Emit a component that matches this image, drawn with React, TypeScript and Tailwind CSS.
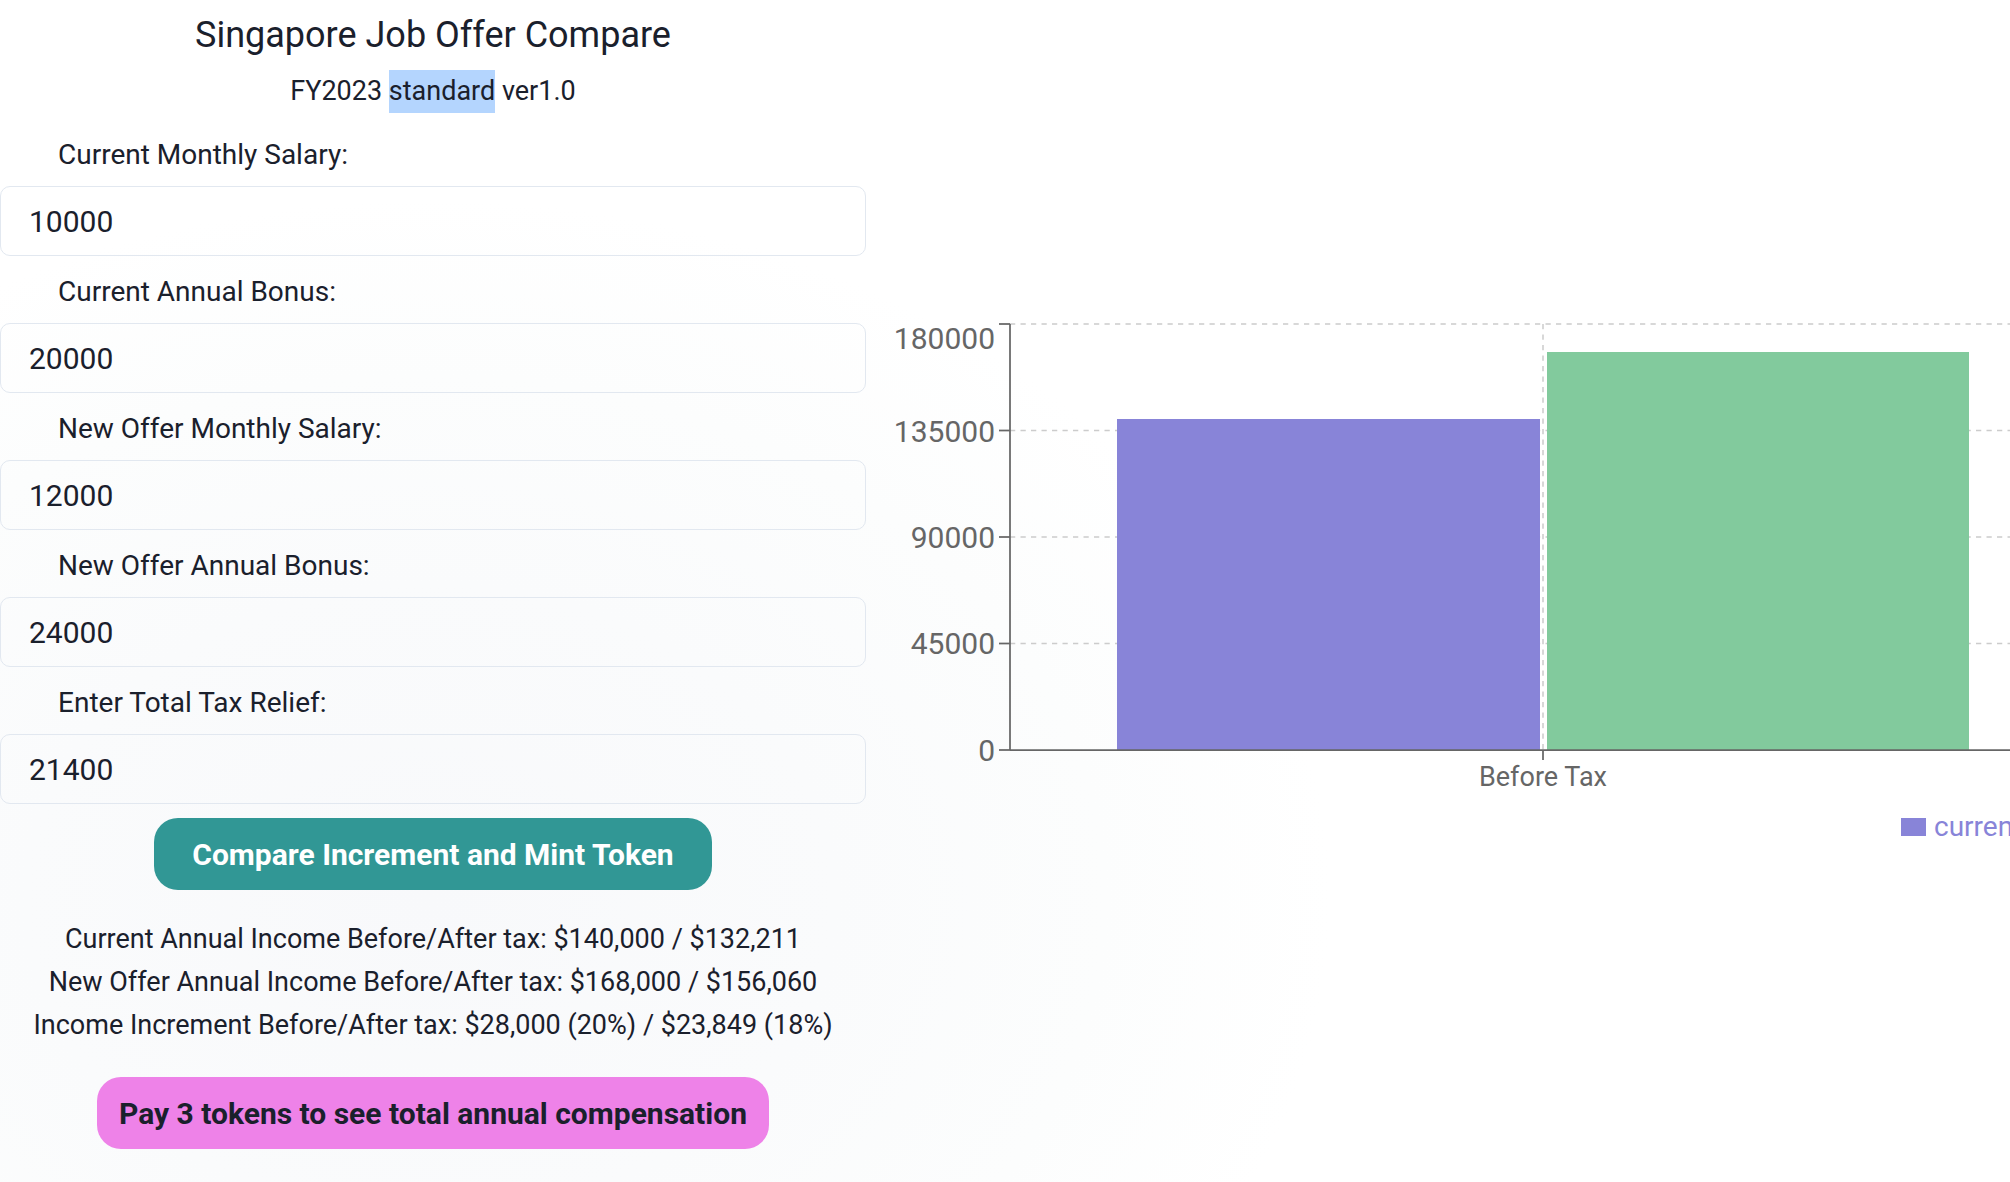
import React from "react";

const fields = [
  { label: "Current Monthly Salary:", value: "10000" },
  { label: "Current Annual Bonus:", value: "20000" },
  { label: "New Offer Monthly Salary:", value: "12000" },
  { label: "New Offer Annual Bonus:", value: "24000" },
  { label: "Enter Total Tax Relief:", value: "21400" },
];

function Chart() {
  const ax = 144;
  const base = 750;
  const ticks = [
    { v: "180000", y: 324, ly: 348.5 },
    { v: "135000", y: 430.5, ly: 441.5 },
    { v: "90000", y: 537, ly: 547.5 },
    { v: "45000", y: 643.5, ly: 654 },
    { v: "0", y: 750, ly: 760.5 },
  ];
  return (
    <svg width={1144} height={1182} className="block" style={{ overflow: "hidden" }}>
      {ticks.slice(0, 4).map((t) => (
        <line key={t.v} x1={ax} x2={1400} y1={t.y} y2={t.y} stroke="#cccccc" strokeWidth={1.5} strokeDasharray="5.25 5.25" />
      ))}
      <line x1={677} x2={677} y1={324} y2={base} stroke="#cccccc" strokeWidth={1.5} strokeDasharray="5.25 5.25" />
      <rect x={251} y={419} width={423} height={331} fill="#8884d8" />
      <rect x={681} y={352} width={422} height={398} fill="#82ca9d" />
      <line x1={ax} x2={ax} y1={324} y2={base} stroke="#666666" strokeWidth={1.75} />
      <line x1={ax} x2={1400} y1={base} y2={base} stroke="#666666" strokeWidth={1.75} />
      {ticks.map((t) => (
        <g key={"t" + t.v}>
          <line x1={133} x2={ax} y1={t.y} y2={t.y} stroke="#666666" strokeWidth={1.75} />
          <text x={129} y={t.ly} textAnchor="end" fill="#666666" fontSize={30} fontFamily="Roboto, sans-serif">
            {t.v}
          </text>
        </g>
      ))}
      <line x1={677} x2={677} y1={base} y2={760} stroke="#666666" strokeWidth={1.75} />
      <text x={677} y={786} textAnchor="middle" fill="#666666" fontSize={27} fontFamily="Roboto, sans-serif">
        Before Tax
      </text>
      <rect x={1035} y={818} width={25} height={18} fill="#8884d8" />
      <text x={1068} y={836} fill="#8884d8" fontSize={28} fontFamily="Roboto, sans-serif">
        current
      </text>
    </svg>
  );
}

export default function App() {
  return (
    <div className="w-[2010px] h-[1182px] overflow-hidden flex bg-[radial-gradient(ellipse_900px_700px_at_430px_900px,#f8f9fb_0%,#fafbfc_45%,#fcfdfd_75%,#ffffff_100%)] font-['Roboto','Liberation_Sans',sans-serif] text-[#1a202c]">
      <div className="w-[866px] shrink-0 flex flex-col">
        <h1 className="mt-[10px] h-[50px] leading-[50px] text-center text-[36px] font-normal">
          Singapore Job Offer Compare
        </h1>
        <p className="mt-[10px] h-[43px] leading-[43px] text-center text-[27px]">
          FY2023 <span className="inline-block bg-[#b4d5fe] leading-[43px]">standard</span> ver1.0
        </p>
        <div className="mt-[21px] flex flex-col gap-[15px]">
          {fields.map((f) => (
            <div key={f.label} className="flex flex-col">
              <label className="pl-[58px] h-[42px] leading-[42px] text-[28px]">{f.label}</label>
              <input
                readOnly
                value={f.value}
                className="mt-[10px] h-[70px] w-full rounded-[10px] border border-[#e2e8f0] bg-transparent px-[28px] text-[30px] text-[#1a202c] outline-none"
              />
            </div>
          ))}
        </div>
        <button className="mt-[14px] self-center h-[72px] px-[38px] rounded-[24px] bg-[#319795] text-white font-bold text-[30px]">
          Compare Increment and Mint Token
        </button>
        <div className="mt-[28px] flex flex-col text-center text-[27px] leading-[43px]">
          <p>Current Annual Income Before/After tax: $140,000 / $132,211</p>
          <p>New Offer Annual Income Before/After tax: $168,000 / $156,060</p>
          <p>Income Increment Before/After tax: $28,000 (20%) / $23,849 (18%)</p>
        </div>
        <button className="mt-[30px] self-center h-[72px] px-[22px] rounded-[24px] bg-[#ee82e8] text-[#1a202c] font-bold text-[30px]">
          Pay 3 tokens to see total annual compensation
        </button>
      </div>
      <div className="flex-1 min-w-0">
        <Chart />
      </div>
    </div>
  );
}
